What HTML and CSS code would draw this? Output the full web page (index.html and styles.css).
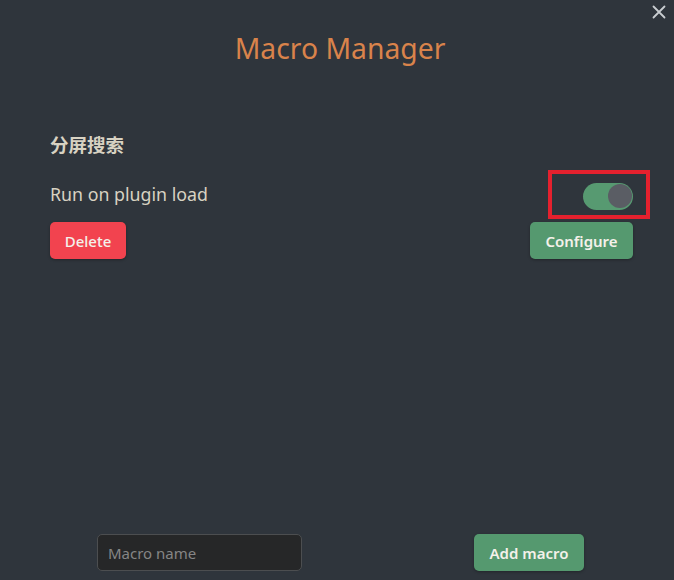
FILE: index.html
```html
<!DOCTYPE html>
<html lang="en">
<head>
<meta charset="utf-8">
<title>Macro Manager</title>
<link rel="stylesheet" href="styles.css">
</head>
<body>
<div class="modal">
  <button class="close" aria-label="Close">
    <svg width="14" height="14" viewBox="0 0 14 14"><path d="M1.5 1.5 L12.5 12.5 M12.5 1.5 L1.5 12.5" stroke="#c9cdd1" stroke-width="1.8" stroke-linecap="round"/></svg>
  </button>
  <h1 class="title">Macro Manager</h1>
  <section class="macro">
    <h3 class="macro-name">分屏搜索</h3>
    <div class="setting-row">
      <span class="setting-label">Run on plugin load</span>
      <div class="highlight">
        <div class="toggle"><span class="knob"></span></div>
      </div>
    </div>
    <div class="actions">
      <button class="btn btn-red">Delete</button>
      <button class="btn btn-green">Configure</button>
    </div>
  </section>
  <div class="add-row">
    <input class="name-input" type="text" placeholder="Macro name">
    <button class="btn btn-green btn-add">Add macro</button>
  </div>
</div>
</body>
</html>
```

FILE: styles.css
```css
html, body {
  margin: 0;
  padding: 0;
  height: 100%;
  background: #2f353c;
}
body {
  font-family: "Noto Sans", "Noto Sans CJK SC", sans-serif;
  color: #d8d2c2;
}
.modal {
  position: relative;
  height: 580px;
  display: flex;
  flex-direction: column;
  box-sizing: border-box;
}
.close {
  position: absolute;
  top: 4px;
  right: 7px;
  background: none;
  border: 0;
  padding: 0;
  width: 16px;
  height: 16px;
  display: flex;
  align-items: center;
  justify-content: center;
}
.title {
  margin: 28px 0 0 6px;
  text-align: center;
  font-size: 28.3px;
  font-weight: 400;
  color: #d9834b;
  line-height: 40px;
}
.macro {
  padding: 0 41px 0 50px;
  margin-top: 64px;
}
.macro-name {
  margin: 0;
  font-family: "Noto Sans CJK SC", sans-serif;
  font-size: 18.5px;
  font-weight: 700;
  line-height: 24px;
  color: #d8d2c2;
}
.setting-row {
  display: flex;
  justify-content: space-between;
  align-items: center;
  margin-top: 24px;
  height: 28px;
}
.setting-label {
  font-size: 17.8px;
  line-height: 24px;
}
.highlight {
  border: 4px solid #e5212e;
  padding: 9px 13px 5px 31px;
  margin-right: -17px;
}
.toggle {
  width: 50px;
  height: 27px;
  border-radius: 14px;
  background: #579a71;
  display: flex;
  align-items: center;
  justify-content: flex-end;
  padding-right: 1px;
  box-sizing: border-box;
}
.knob {
  width: 24px;
  height: 24px;
  border-radius: 50%;
  background: #5a5d64;
}
.actions {
  display: flex;
  justify-content: space-between;
  margin-top: 14px;
}
.btn {
  font-family: "Noto Sans", sans-serif;
  font-size: 15px;
  font-weight: 600;
  height: 37px;
  padding: 0 10px;
  border: 0;
  border-radius: 5px;
  color: #f4f1ea;
  box-shadow: 0 1px 3px rgba(0,0,0,0.3);
}
.btn-red {
  background: #f2434f;
  font-weight: 500;
  width: 76px;
}
.btn-green {
  background: #55996f;
  width: 103px;
}
.add-row {
  margin-top: auto;
  margin-bottom: 9px;
  display: flex;
  justify-content: space-between;
  align-items: center;
  padding: 0 90px 0 97px;
}
.name-input {
  width: 205px;
  height: 37px;
  box-sizing: border-box;
  background: #262728;
  border: 1px solid #4c4e50;
  border-radius: 5px;
  padding: 0 10px;
  font-family: "Noto Sans", sans-serif;
  font-size: 15px;
  color: #ddd;
}
.name-input::placeholder {
  color: #858585;
}
.btn-add {
  width: 110px;
}
```
